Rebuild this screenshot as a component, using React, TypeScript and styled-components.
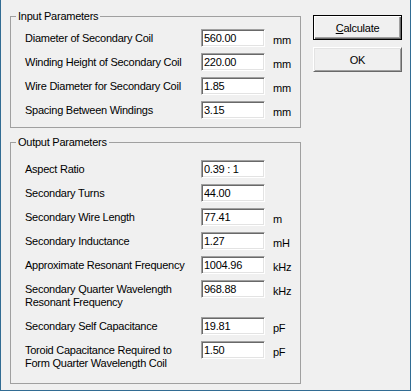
import styled, { createGlobalStyle } from "styled-components";

const GlobalStyle = createGlobalStyle`
  html, body {
    margin: 0;
    padding: 0;
    background: #f0f0f0;
  }
  body {
    font-family: "Liberation Sans", Arial, sans-serif;
    font-size: 11px;
    color: #000;
  }
`;

type Param = { label: string[]; value: string; unit?: string };

const inputs: Param[] = [
  { label: ["Diameter of Secondary Coil"], value: "560.00", unit: "mm" },
  { label: ["Winding Height of Secondary Coil"], value: "220.00", unit: "mm" },
  { label: ["Wire Diameter for Secondary Coil"], value: "1.85", unit: "mm" },
  { label: ["Spacing Between Windings"], value: "3.15", unit: "mm" },
];

const outputs: Param[] = [
  { label: ["Aspect Ratio"], value: "0.39 : 1" },
  { label: ["Secondary Turns"], value: "44.00" },
  { label: ["Secondary Wire Length"], value: "77.41", unit: "m" },
  { label: ["Secondary Inductance"], value: "1.27", unit: "mH" },
  { label: ["Approximate Resonant Frequency"], value: "1004.96", unit: "kHz" },
  {
    label: ["Secondary Quarter Wavelength", "Resonant Frequency"],
    value: "968.88",
    unit: "kHz",
  },
  { label: ["Secondary Self Capacitance"], value: "19.81", unit: "pF" },
  {
    label: ["Toroid Capacitance Required to", "Form Quarter Wavelength Coil"],
    value: "1.50",
    unit: "pF",
  },
];

const App = () => {
  return (
    <>
      <GlobalStyle />
      <Window>
        <Groups>
          <Group $pt={6} $pb={8}>
            <Legend>Input Parameters</Legend>
            <Rows>
              {inputs.map((p) => (
                <Row key={p.label[0]}>
                  <Label>
                    {p.label.map((l) => (
                      <div key={l}>{l}</div>
                    ))}
                  </Label>
                  <Field defaultValue={p.value} />
                  {p.unit && <Unit>{p.unit}</Unit>}
                </Row>
              ))}
            </Rows>
          </Group>
          <Group $pt={11} $pb={11}>
            <Legend>Output Parameters</Legend>
            <Rows>
              {outputs.map((p) => (
                <Row key={p.label[0]}>
                  <Label>
                    {p.label.map((l) => (
                      <div key={l}>{l}</div>
                    ))}
                  </Label>
                  <Field defaultValue={p.value} readOnly />
                  {p.unit && <Unit>{p.unit}</Unit>}
                </Row>
              ))}
            </Rows>
          </Group>
        </Groups>
        <Buttons>
          <Button $isDefault>
            <u>C</u>alculate
          </Button>
          <Button>OK</Button>
        </Buttons>
      </Window>
    </>
  );
};

export default App;

const Window = styled.div`
  width: 411px;
  height: 391px;
  box-sizing: border-box;
  border: 1px solid #326c93;
  border-top: none;
  background: #f0f0f0;
  display: flex;
  align-items: flex-start;
  padding: 10px 0 0 9px;
  letter-spacing: -0.25px;
`;

const Groups = styled.div`
  width: 291px;
  flex: none;
  display: flex;
  flex-direction: column;
  gap: 8px;
`;

const Group = styled.fieldset<{ $pt: number; $pb: number }>`
  margin: 0;
  min-width: 0;
  border: 1px solid #a0a0a0;
  padding: ${(p) => p.$pt}px 6px ${(p) => p.$pb}px 5px;
`;

const Legend = styled.legend`
  padding: 0 2px;
  line-height: 13px;
`;

const Rows = styled.div`
  display: flex;
  flex-direction: column;
  gap: 6px;
  padding-left: 9px;
`;

const Row = styled.div`
  display: flex;
  align-items: flex-start;
`;

const Label = styled.div`
  width: 176px;
  flex: none;
  padding: 3px 0 2px;
  line-height: 13px;
  white-space: nowrap;
`;

const Field = styled.input`
  width: 64px;
  height: 18px;
  flex: none;
  box-sizing: border-box;
  margin: 0;
  padding: 0 2px;
  border: 1px solid;
  border-color: #a0a0a0 #fff #fff #a0a0a0;
  box-shadow: inset 1px 1px 0 #696969, inset -1px -1px 0 #e3e3e3;
  background: #fff;
  font: inherit;
  line-height: 16px;
  letter-spacing: inherit;
  color: #000;
  outline: none;
`;

const Unit = styled.div`
  margin-left: 8px;
  padding-top: 5px;
  line-height: 13px;
`;

const Buttons = styled.div`
  width: 89px;
  flex: none;
  margin-left: 12px;
  padding-top: 5px;
  display: flex;
  flex-direction: column;
  gap: 7px;
`;

const Button = styled.button<{ $isDefault?: boolean }>`
  height: 25px;
  width: 100%;
  box-sizing: border-box;
  margin: 0;
  padding: 0;
  background: #f0f0f0;
  font: inherit;
  letter-spacing: inherit;
  color: #000;
  cursor: pointer;
  border: 1px solid;
  border-color: ${(p) =>
    p.$isDefault ? "#000" : "#fff #696969 #696969 #fff"};
  box-shadow: ${(p) =>
    p.$isDefault
      ? "inset 1px 1px 0 #fff, inset -1px -1px 0 #696969, inset -2px -2px 0 #a0a0a0"
      : "inset 1px 1px 0 #e3e3e3, inset -1px -1px 0 #a0a0a0"};

  u {
    text-decoration-thickness: 1px;
    text-underline-offset: 1px;
  }
`;
